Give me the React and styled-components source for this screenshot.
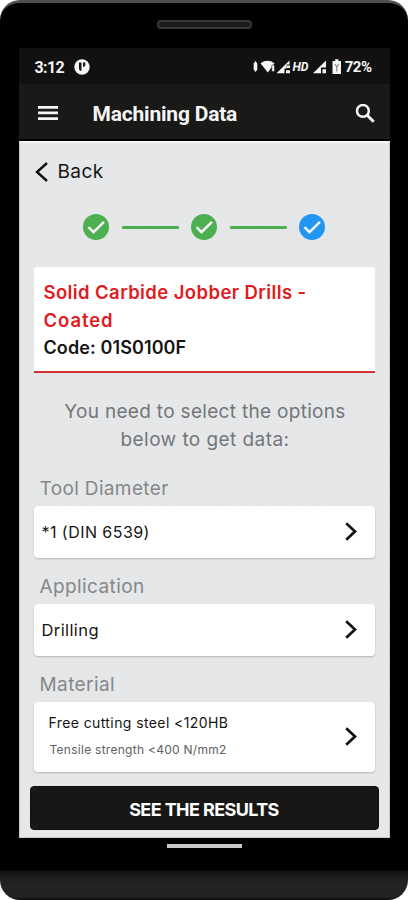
import React from "react";
import { styled, createGlobalStyle } from "styled-components";

const GlobalStyle = createGlobalStyle`
  * {
    box-sizing: border-box;
  }

  body {
    margin: 0;
    background: #fff;
    font-family: Inter, "Open Sans", sans-serif;
  }
`;

const Phone = styled.div`
  width: 408px;
  height: 900px;
  display: flex;
  flex-direction: column;
  align-items: center;
  background: linear-gradient(#000 867px, #101010 868px, #1c1c1c 874px, #232323 882px, #232323 894px, #080808 897px);
  border-top: 3px solid #505050;
  border-radius: 20px;
  overflow: hidden;
`;

const Earpiece = styled.div`
  width: 95px;
  height: 9px;
  flex: none;
  margin: 17px 0 19px;
  background: #1b1b1b;
  border: 2px solid #373737;
  border-radius: 4px;
`;

const Screen = styled.div`
  width: 371px;
  height: 789px;
  flex: none;
  display: flex;
  flex-direction: column;
  background: #e5e7e8;
`;

const StatusBar = styled.div`
  height: 36px;
  flex: none;
  display: flex;
  align-items: center;
  padding: 2px 18px 0 16px;
  background: #111;
  color: #f4f4f4;
  font-family: Roboto, sans-serif;
  font-weight: 700;
`;

const Clock = styled.span`
  width: 39px;
  font-size: 16px;
  letter-spacing: -0.6px;
`;

const StatusIcons = styled.div`
  display: flex;
  align-items: center;
  margin-left: auto;
`;

const Percent = styled.span`
  font-size: 15px;
  letter-spacing: -0.5px;
`;

const AppBar = styled.header`
  height: 57px;
  flex: none;
  display: flex;
  align-items: center;
  padding: 4px 15px 0 19px;
  background: #191917;
  border-bottom: 2px solid #000;
  color: #f5f5f5;
`;

const AppTitle = styled.h1`
  flex: 1;
  margin: 0 0 0 35px;
  font-family: Roboto, sans-serif;
  font-size: 21px;
  font-weight: 700;
  letter-spacing: ${(props) => props.$spacing}px;
`;

const Content = styled.main`
  flex: 1;
  display: flex;
  flex-direction: column;
  padding: 0 14px 7px;
  border: 1px solid #c9cbcb;
  border-top: 2px solid #f4f4f4;
  background: repeating-linear-gradient(135deg, #e5e7e8 0 3px, #e4e6e7 3px 4px);
`;

const Text = styled.span`
  display: block;
  font-size: ${(props) => props.$size}px;
  font-weight: ${(props) => props.$weight || 400};
  line-height: ${(props) => props.$line || 28}px;
  letter-spacing: ${(props) => props.$spacing || 0}px;
  color: ${(props) => props.$color || "#151515"};
  white-space: nowrap;
`;

const BackLink = styled.div`
  height: 58px;
  display: flex;
  align-items: center;
  gap: 10px;
  padding-left: 1px;
`;

const Steps = styled.div`
  height: 52px;
  display: flex;
  align-items: center;
  justify-content: center;
  gap: 12.5px;
`;

const StepLine = styled.div`
  width: 57px;
  height: 3px;
  border-radius: 1px;
  background: #4caf50;
`;

const ProductCard = styled.section`
  height: 106px;
  margin-top: 14px;
  padding: 11px 10px 0;
  background: #fff;
  border-bottom: 2px solid #d32f32;
  border-radius: 3px 3px 0 0;
`;

const Hint = styled.div`
  display: flex;
  flex-direction: column;
  align-items: center;
  margin: 25px 0 20px;
  padding-left: 2px;
`;

const Label = styled.div`
  height: 32px;
  padding: 1px 0 0 6px;
`;

const Select = styled.div`
  height: ${(props) => props.$height || 52}px;
  flex: none;
  display: flex;
  align-items: center;
  justify-content: space-between;
  margin-bottom: 14px;
  padding: 0 18px 0 8px;
  background: #fff;
  border-radius: 4px;
  box-shadow: 0 1px 2px rgba(0, 0, 0, 0.22);
`;

const Material = styled.div`
  padding: 0 0 3px 7px;
`;

const Strength = styled.div`
  padding-left: 1px;
`;

const ResultsButton = styled.button`
  height: 44px;
  margin: 0 -4px;
  padding: 3px 0 0;
  display: flex;
  align-items: center;
  justify-content: center;
  background: #171716;
  border: 1px solid #0c0c0c;
  border-radius: 4px;
  font-family: inherit;
`;

const HomeBar = styled.div`
  width: 75px;
  height: 4px;
  flex: none;
  margin-top: 7px;
  background: #c9c9c9;
`;

const Check = ({ color }) => (
  <svg width="26" height="26" viewBox="0 0 26 26" fill="none">
    <circle cx="13" cy="13" r="13" fill={color} />
    <path d="M5.5 13.2l5 5L21 7.8" stroke="#f1f4f3" strokeWidth="2.6" />
  </svg>
);

const Chevron = () => (
  <svg width="12" height="20" viewBox="0 0 12 20" fill="none">
    <path d="M1.2 1.2L10 9.5l-8.8 8.3" stroke="#111" strokeWidth="2.7" />
  </svg>
);

const BackIcon = () => (
  <svg width="13" height="20" viewBox="0 0 13 20" fill="none">
    <path d="M12 1L2 10l10 9" stroke="#111" strokeWidth="2.4" />
  </svg>
);

const MenuIcon = () => (
  <svg width="20" height="15" viewBox="0 0 20 15" fill="#f5f5f5">
    <path d="M0 0h20v2.7H0zM0 5.6h20v2.7H0zM0 11.2h20v2.7H0z" />
  </svg>
);

const SearchIcon = () => (
  <svg width="20" height="20" viewBox="0 0 20 20" fill="none" stroke="#f5f5f5">
    <circle cx="7.9" cy="6.9" r="5.9" strokeWidth="2.5" />
    <path d="M12.2 11.2l6.5 6.5" strokeWidth="3" />
  </svg>
);

const NotificationIcon = () => (
  <svg width="16" height="16" viewBox="0 0 16 16">
    <circle cx="8" cy="8" r="7.7" fill="#f5f5f5" />
    <path d="M5 3.4h2.5v8.4H6.2L5 10.2zM9 3.4h2.3v3.2l-1 1.1H9z" fill="#151515" />
  </svg>
);

const SignalIcons = () => (
  <svg width="92" height="18" viewBox="0 0 92 18" fill="#f5f5f5">
    <path d="M2.5 3L4.3 5.5v6l-1.8 2.5L.7 11.5v-6z" />
    <path d="M7.5 5.2Q14.5.5 21.5 5.2L14.8 14.5z" />
    <path d="M18.8 7h2.7v6.5h-2.7z" stroke="#111" strokeWidth=".5" />
    <path d="M23.5 15.2L36.5 2.5v4h-2.8v4h-2.2v4.7z" />
    <path d="M34 7.5h3V10h-3zM33 12.2h4v3h-4z" />
    <text
      x="39.5"
      y="13"
      fontFamily="Roboto, sans-serif"
      fontSize="13"
      fontWeight="700"
      fontStyle="italic"
      textLength="16"
      lengthAdjust="spacingAndGlyphs"
    >
      HD
    </text>
    <path d="M60 15.2L73 2.5v7h-5v5.7zM69.5 11.2H73v4h-3.5z" />
    <path d="M82.2 1.3h3.2V3H88v13h-8.5V3h2.7z" />
    <path d="M82 6l1.8 3.2v4.3M85.6 6l-1.8 3.2" fill="none" stroke="#777" strokeWidth="1" />
  </svg>
);

const App = () => {
  return (
    <>
      <GlobalStyle />
      <Phone>
        <Earpiece />
        <Screen>
          <StatusBar>
            <Clock>3:12</Clock>
            <NotificationIcon />
            <StatusIcons>
              <SignalIcons />
              <Percent>72%</Percent>
            </StatusIcons>
          </StatusBar>
          <AppBar>
            <MenuIcon />
            <AppTitle $spacing={-0.2}>Machining Data</AppTitle>
            <SearchIcon />
          </AppBar>
          <Content>
            <BackLink>
              <BackIcon />
              <Text $size={19} $spacing={0.4}>
                Back
              </Text>
            </BackLink>
            <Steps>
              <Check color="#4caf50" />
              <StepLine />
              <Check color="#4caf50" />
              <StepLine />
              <Check color="#2196f3" />
            </Steps>
            <ProductCard>
              <Text $size={18.5} $weight={600} $spacing={0.4} $color="#e11b22">
                Solid Carbide Jobber Drills -
              </Text>
              <Text $size={18.5} $weight={600} $spacing={0.9} $color="#e11b22">
                Coated
              </Text>
              <Text $size={18} $weight={600} $spacing={0.1}>
                Code: 01S0100F
              </Text>
            </ProductCard>
            <Hint>
              <Text $size={19} $spacing={0.31} $color="#747678">
                You need to select the options
              </Text>
              <Text $size={19} $spacing={0.44} $color="#747678">
                below to get data:
              </Text>
            </Hint>
            <Label>
              <Text $size={19} $spacing={0.36} $color="#858789">
                Tool Diameter
              </Text>
            </Label>
            <Select>
              <Text $size={16} $spacing={0.45}>
                *1 (DIN 6539)
              </Text>
              <Chevron />
            </Select>
            <Label>
              <Text $size={19} $spacing={0.4} $color="#858789">
                Application
              </Text>
            </Label>
            <Select>
              <Text $size={16.5} $spacing={0.4}>
                Drilling
              </Text>
              <Chevron />
            </Select>
            <Label>
              <Text $size={19} $spacing={0.4} $color="#858789">
                Material
              </Text>
            </Label>
            <Select $height={70}>
              <Material>
                <Text $size={14} $spacing={0.4}>
                  Free cutting steel &lt;120HB
                </Text>
                <Strength>
                  <Text $size={12} $spacing={0.27} $line={26} $color="#606060">
                    Tensile strength &lt;400 N/mm2
                  </Text>
                </Strength>
              </Material>
              <Chevron />
            </Select>
            <ResultsButton>
              <Text $size={18} $weight={700} $spacing={-0.6} $color="#fff">
                SEE THE RESULTS
              </Text>
            </ResultsButton>
          </Content>
        </Screen>
        <HomeBar />
      </Phone>
    </>
  );
};

export default App;
